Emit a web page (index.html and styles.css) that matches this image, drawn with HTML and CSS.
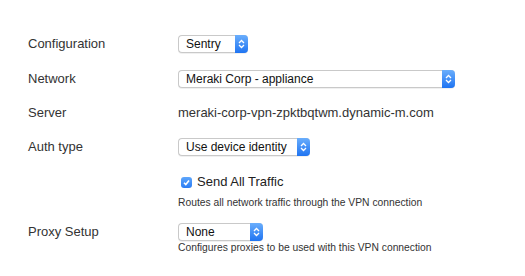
FILE: index.html
```html
<!DOCTYPE html>
<html lang="en">
<head>
  <meta charset="UTF-8" />
  <title>VPN Settings</title>
  <link rel="stylesheet" href="styles.css">
</head>
<body>
  <div class="form">

    <div class="row">
      <div class="label">Configuration</div>
      <div class="field">
        <div class="select w-sentry">
          <span class="value">Sentry</span>
          <span class="stepper"><svg width="7" height="10" viewBox="0 0 7 10"><polyline points="1,4 3.5,1.5 6,4" /><polyline points="1,6 3.5,8.5 6,6" /></svg></span>
        </div>
      </div>
    </div>

    <div class="row">
      <div class="label">Network</div>
      <div class="field">
        <div class="select w-network">
          <span class="value">Meraki Corp - appliance</span>
          <span class="stepper"><svg width="7" height="10" viewBox="0 0 7 10"><polyline points="1,4 3.5,1.5 6,4" /><polyline points="1,6 3.5,8.5 6,6" /></svg></span>
        </div>
      </div>
    </div>

    <div class="row row-text">
      <div class="label">Server</div>
      <div class="field server">meraki-corp-vpn-zpktbqtwm.dynamic-m.com</div>
    </div>

    <div class="row">
      <div class="label">Auth type</div>
      <div class="field">
        <div class="select w-auth">
          <span class="value">Use device identity</span>
          <span class="stepper"><svg width="7" height="10" viewBox="0 0 7 10"><polyline points="1,4 3.5,1.5 6,4" /><polyline points="1,6 3.5,8.5 6,6" /></svg></span>
        </div>
      </div>
    </div>

    <div class="row row-check">
      <div class="label"></div>
      <div class="field">
        <label class="check">
          <span class="box"><svg width="11" height="11" viewBox="0 0 11 11"><polyline points="3,5.8 4.8,7.6 8,3.6" /></svg></span>
          Send All Traffic
        </label>
        <div class="help help-check">Routes all network traffic through the VPN connection</div>
      </div>
    </div>

    <div class="row">
      <div class="label">Proxy Setup</div>
      <div class="field">
        <div class="select w-proxy">
          <span class="value">None</span>
          <span class="stepper"><svg width="7" height="10" viewBox="0 0 7 10"><polyline points="1,4 3.5,1.5 6,4" /><polyline points="1,6 3.5,8.5 6,6" /></svg></span>
        </div>
        <div class="help">Configures proxies to be used with this VPN connection</div>
      </div>
    </div>

  </div>
</body>
</html>
```

FILE: styles.css
```css
body {
  margin: 0;
  background: #ffffff;
  font-family: "Liberation Sans", Arial, sans-serif;
  color: #333333;
}

.form {
  padding: 35px 0 0 28px;
}

.row {
  display: grid;
  grid-template-columns: 150px auto;
  align-items: start;
  margin-bottom: 17px;
}

.row-text {
  margin-top: -1px;
}

.row-check {
  margin-bottom: 14px;
}

.label {
  font-size: 13px;
  line-height: 16px;
  padding-top: 1px;
}

.server {
  font-size: 13px;
  line-height: 16px;
  padding-top: 1px;
}

/* fake mac-style popup buttons */
.select {
  display: flex;
  align-items: stretch;
  height: 18px;
  box-sizing: border-box;
  border: 1px solid #c9c9c9;
  border-right: none;
  border-radius: 4px;
  background: #ffffff;
  box-shadow: 0 1px 0 rgba(0, 0, 0, 0.06);
}

.select .value {
  flex: 1;
  font-size: 12px;
  line-height: 16px;
  color: #111111;
  padding-left: 7px;
  white-space: nowrap;
}

.select .stepper {
  width: 13px;
  margin: -1px 0;
  border-radius: 0 4px 4px 0;
  background: linear-gradient(#6aaefc, #1f74f2);
  display: flex;
  align-items: center;
  justify-content: center;
}

.stepper svg polyline {
  fill: none;
  stroke: #ffffff;
  stroke-width: 1.3;
}

.w-sentry { width: 70px; }
.w-network { width: 277px; }
.w-auth { width: 132px; }
.w-proxy { width: 85px; }

.check {
  display: flex;
  align-items: center;
  gap: 5px;
  font-size: 13px;
  line-height: 18px;
  color: #222222;
  padding-left: 3px;
}

.check .box {
  width: 11px;
  height: 11px;
  border-radius: 3px;
  background: linear-gradient(#5ea6fb, #2a7cf4);
  display: flex;
}

.check .box polyline {
  fill: none;
  stroke: #ffffff;
  stroke-width: 1.6;
}

.help {
  font-size: 10.3px;
  line-height: 12px;
  color: #333333;
  padding-top: 1px;
}

.help-check {
  margin-top: 5px;
}
```
